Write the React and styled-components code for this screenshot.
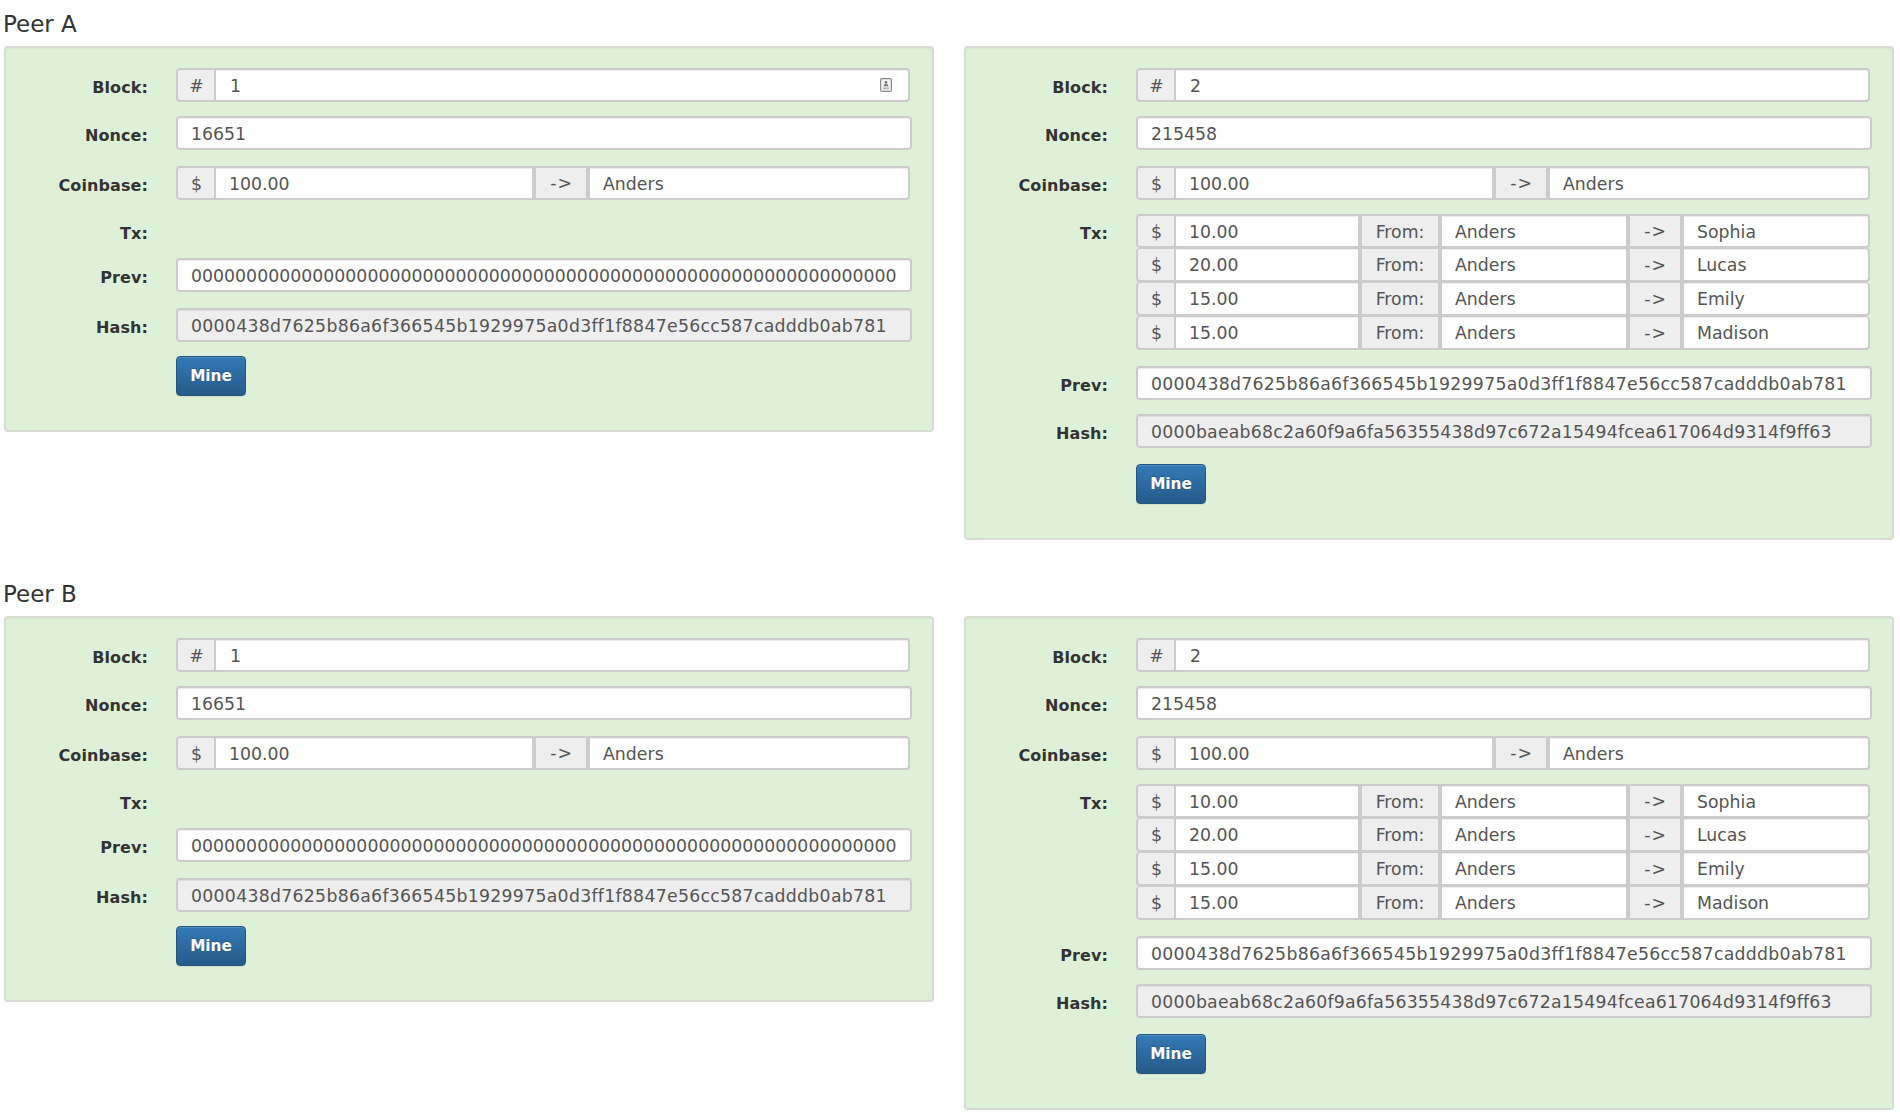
import React from "react";
import styled, { createGlobalStyle } from "styled-components";

const GlobalStyle = createGlobalStyle`
  html, body { margin: 0; padding: 0; background: #fff; }
  body { font-family: "DejaVu Sans", Verdana, sans-serif; color: #333; }
`;

const Page = styled.div`
  width: 1900px;
  height: 1116px;
  padding-left: 4px;
  box-sizing: border-box;
  overflow: hidden;
`;

const Section = styled.section`
  height: 570px;
`;

const Title = styled.h2`
  margin: 0 0 0 -1px;
  height: 46px;
  padding-top: 8px;
  box-sizing: border-box;
  font-size: 23px;
  line-height: 32px;
  font-weight: 400;
  color: #333;
`;

const Cards = styled.div`
  display: grid;
  grid-template-columns: 930px 930px;
  column-gap: 30px;
  align-items: start;
`;

const Card = styled.div`
  box-sizing: border-box;
  background: #dff0d8;
  border: 2px solid #d6dcd3;
  border-radius: 4px;
  padding: 20px 20px 34px 0;
  box-shadow: inset 0 1px 1px rgba(0, 0, 0, 0.03);
`;

const Row = styled.div`
  display: grid;
  grid-template-columns: 142px 1fr;
  column-gap: 28px;
  margin-top: ${(p) => p.$gap || 0}px;
  min-height: ${(p) => p.$minHeight || 34}px;
`;

const Label = styled.div`
  height: 34px;
  line-height: 40px;
  text-align: right;
  font-size: 16px;
  font-weight: 700;
  letter-spacing: 0.1px;
  color: #333;
`;

const Group = styled.div`
  display: flex;
  position: relative;
  height: 34px;
  box-sizing: border-box;
  width: ${(p) => (p.$wide ? 736 : 734)}px;
`;

const Cell = styled.div`
  box-sizing: border-box;
  height: 34px;
  border: 2px solid #ccc;
  border-top-width: ${(p) => (p.$joined ? 1 : 2)}px;
  line-height: ${(p) => (p.$joined ? 33 : 32)}px;
  font-size: 17.3px;
  color: #555;
  white-space: nowrap;
  overflow: hidden;
`;

const Input = styled(Cell)`
  flex: ${(p) => (p.$w ? `0 0 ${p.$w}px` : "1 1 auto")};
  padding: 0 ${(p) => (p.$pad ? p.$pad : 13)}px;
  background: ${(p) => (p.$readOnly ? "#eee" : "#fff")};
  box-shadow: inset 0 1px 1px rgba(0, 0, 0, 0.075);
  letter-spacing: ${(p) => p.$track ?? 0.03}px;
  border-top-left-radius: ${(p) => (p.$first ? 4 : 0)}px;
  border-bottom-left-radius: ${(p) => (p.$first ? 4 : 0)}px;
  border-top-right-radius: ${(p) => (p.$last ? 4 : 0)}px;
  border-bottom-right-radius: ${(p) => (p.$last ? 4 : 0)}px;
`;

const Addon = styled(Cell)`
  flex: 0 0 ${(p) => p.$w}px;
  background: #eee;
  text-align: center;
  padding-left: ${(p) => (p.$first ? 1 : 0)}px;
  border-right-width: ${(p) => (p.$first ? 0 : 2)}px;
  border-top-left-radius: ${(p) => (p.$first ? 4 : 0)}px;
  border-bottom-left-radius: ${(p) => (p.$first ? 4 : 0)}px;
`;

const Arrow = styled(Addon)`
  padding-left: 1px;
  line-height: ${(p) => (p.$joined ? 32 : 31)}px;
  letter-spacing: 1px;
`;

const FieldIcon = styled.svg`
  position: absolute;
  left: 704px;
  top: 10px;
  width: 12px;
  height: 14px;
`;

const MineButton = styled.button`
  display: block;
  box-sizing: border-box;
  width: 70px;
  height: 40px;
  padding: 0;
  border: 1px solid #245580;
  border-radius: 4px;
  background: linear-gradient(to bottom, #337ab7 0, #265a88 100%);
  box-shadow: inset 0 1px 0 rgba(255, 255, 255, 0.15), 0 1px 1px rgba(0, 0, 0, 0.075);
  color: #fff;
  font-family: inherit;
  font-size: 15.3px;
  font-weight: 700;
  line-height: 36px;
  text-shadow: 0 -1px 0 rgba(0, 0, 0, 0.2);
`;

const Empty = styled.div``;

const ZERO = "0".repeat(64);
const H1 = "0000438d7625b86a6f366545b1929975a0d3ff1f8847e56cc587cadddb0ab781";
const H2 = "0000baeab68c2a60f9a6fa56355438d97c672a15494fcea617064d9314f9ff63";

const TXS = [
  ["10.00", "Sophia"],
  ["20.00", "Lucas"],
  ["15.00", "Emily"],
  ["15.00", "Madison"],
];

const ContactIcon = () => (
  <FieldIcon viewBox="0 0 12 14" aria-hidden="true">
    <rect x="0.6" y="0.6" width="10.8" height="12.8" rx="1.2" fill="#f4f4f4" stroke="#8c8c8c" strokeWidth="1.2" />
    <circle cx="6" cy="4.4" r="1.3" fill="#777" />
    <path d="M3.6 8.2c0-1.4 1-2.1 2.4-2.1s2.4.7 2.4 2.1z" fill="#777" />
    <rect x="3" y="9.4" width="6" height="1.8" fill="#b5b5b5" />
  </FieldIcon>
);

const Block = ({ number, nonce, prev, prevTrack, hash, hashTrack, txs, icon }) => (
  <Card>
    <Row>
      <Label>Block:</Label>
      <Group>
        <Addon $first $w={38}>#</Addon>
        <Input $last $pad={14}>{number}</Input>
        {icon && <ContactIcon />}
      </Group>
    </Row>
    <Row $gap={14}>
      <Label>Nonce:</Label>
      <Group $wide>
        <Input $first $last>{nonce}</Input>
      </Group>
    </Row>
    <Row $gap={16}>
      <Label>Coinbase:</Label>
      <Group>
        <Addon $first $w={38}>$</Addon>
        <Input $w={320}>100.00</Input>
        <Arrow $w={54}>-&gt;</Arrow>
        <Input $last>Anders</Input>
      </Group>
    </Row>
    <Row $gap={14} $minHeight={txs ? 136 : 34}>
      <Label>Tx:</Label>
      {txs ? (
        <div>
          {txs.map(([amount, to], i) => (
            <Group key={i}>
              <Addon $first $joined={i > 0} $w={38}>$</Addon>
              <Input $joined={i > 0} $w={186}>{amount}</Input>
              <Addon $joined={i > 0} $w={80}>From:</Addon>
              <Input $joined={i > 0} $w={188}>Anders</Input>
              <Arrow $joined={i > 0} $w={54}>-&gt;</Arrow>
              <Input $joined={i > 0} $last>{to}</Input>
            </Group>
          ))}
        </div>
      ) : (
        <Empty />
      )}
    </Row>
    <Row $gap={txs ? 16 : 10}>
      <Label>Prev:</Label>
      <Group $wide>
        <Input $first $last $track={prevTrack}>{prev}</Input>
      </Group>
    </Row>
    <Row $gap={txs ? 14 : 16}>
      <Label>Hash:</Label>
      <Group $wide>
        <Input $first $last $readOnly $track={hashTrack}>{hash}</Input>
      </Group>
    </Row>
    <Row $gap={txs ? 16 : 14} $minHeight={40}>
      <Empty />
      <MineButton type="button">Mine</MineButton>
    </Row>
  </Card>
);

const Peer = ({ name, icon }) => (
  <Section>
    <Title>{name}</Title>
    <Cards>
      <Block number="1" nonce="16651" prev={ZERO} hash={H1} hashTrack={0.29} icon={icon} />
      <Block number="2" nonce="215458" prev={H1} prevTrack={0.29} hash={H2} hashTrack={0.23} txs={TXS} />
    </Cards>
  </Section>
);

export default function App() {
  return (
    <>
      <GlobalStyle />
      <Page>
        <Peer name="Peer A" icon />
        <Peer name="Peer B" />
      </Page>
    </>
  );
}
